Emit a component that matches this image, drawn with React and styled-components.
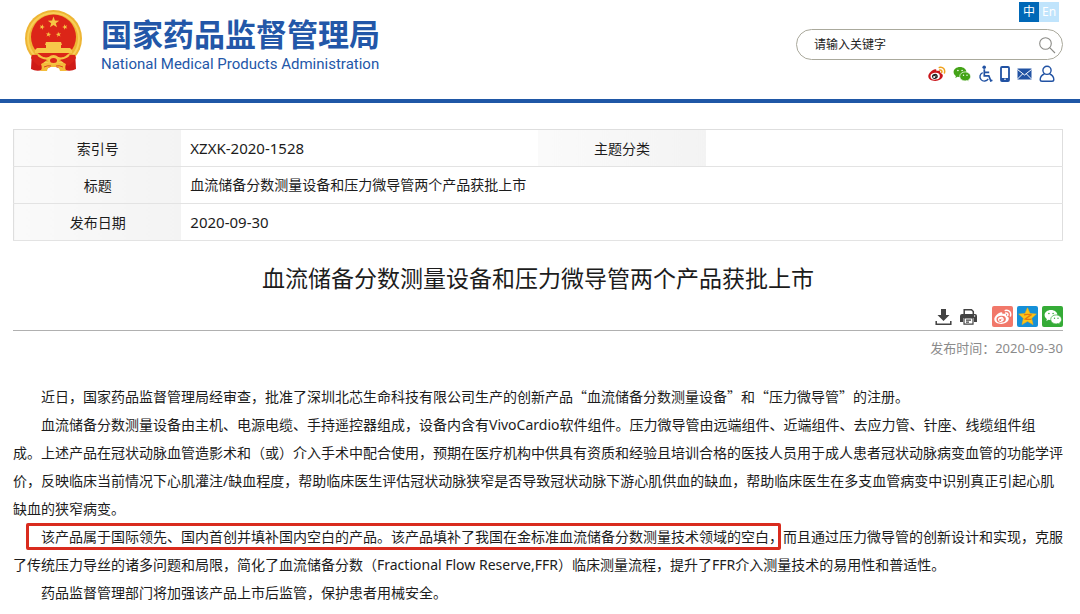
import React from 'react';
import styled, {createGlobalStyle} from "styled-components";

const GlobalStyle = createGlobalStyle`
  * {
    box-sizing: border-box;
  }

  body {
    margin: 0;
    background: #fff;
    color: #1c1c1c;
    font-family: "Noto Sans", "Noto Sans CJK SC", sans-serif;
    font-size: 14px;
    text-spacing-trim: space-all;
  }

  button, input {
    font-family: inherit;
  }
`

const Header = styled.header`
  display: flex;
  justify-content: space-between;
  align-items: flex-start;
  height: 103px;
  padding: 0 17px 0 24px;
  border-bottom: 4px solid #1f57a6;
`

const Brand = styled.a`
  display: flex;
  gap: 18px;
  padding-top: 9px;
  color: #2357a8;
  text-decoration: none;
`

const BrandText = styled.div`
  display: flex;
  flex-direction: column;
  padding-top: 5px;
`

const BrandName = styled.span`
  font-family: "Noto Sans CJK SC", sans-serif;
  font-size: 31px;
  line-height: 38px;
  font-weight: 700;
`

const BrandSub = styled.span`
  margin-top: 2px;
  font-family: Roboto, sans-serif;
  font-size: 15px;
  line-height: 20px;
`

const Tools = styled.div`
  display: flex;
  flex-direction: column;
  align-items: flex-end;
  width: 267px;
  padding-top: 2px;
`

const Langs = styled.div`
  display: flex;
  padding-right: 4px;
`

const Lang = styled.button`
  width: 20px;
  height: 20px;
  padding: 0;
  border: 0;
  font-size: 12px;
  line-height: 20px;
  color: #fff;
  background: ${p => p.$active ? '#0068b7' : '#c0e4fc'};
`

const Search = styled.form`
  display: flex;
  align-items: center;
  width: 100%;
  height: 31px;
  margin-top: 7px;
  padding: 0 6px 0 17px;
  border: 1px solid #aaa99c;
  border-radius: 16px;
`

const SearchInput = styled.input`
  flex: 1;
  min-width: 0;
  padding: 0;
  border: 0;
  outline: 0;
  background: none;
  font-size: 12px;

  &::placeholder {
    color: #222;
    opacity: 1;
  }
`

const IconButton = styled.button`
  display: flex;
  padding: 0;
  border: 0;
  background: none;
  color: #8a8a86;
`

const QuickLinks = styled.nav`
  display: flex;
  align-items: center;
  gap: 7px;
  margin-top: 5px;
  padding-right: 8px;
`

const IconLink = styled.a`
  display: flex;
  color: #2152a3;
`

const Main = styled.main`
  padding: 26px 17px 8px 13px;
`

const InfoTable = styled.table`
  width: 100%;
  table-layout: fixed;
  border-collapse: collapse;
  border: 1px solid #dedede;
`

const Label = styled.th`
  width: 16%;
  height: 37px;
  padding: 0;
  border-bottom: 1px solid #e3e3e3;
  font-weight: 400;
  background: linear-gradient(90deg, #fafafa, #f3f3f3);
`

const Value = styled.td`
  padding: 0 9px;
  border-bottom: 1px solid #e3e3e3;
  font-size: ${p => p.$code ? '15px' : '14px'};
  line-height: 20px;
`

const Title = styled.h1`
  margin: 19px 0 0;
  font-size: 23px;
  line-height: 36px;
  font-weight: 400;
  text-align: center;
`

const ShareBar = styled.div`
  display: flex;
  justify-content: flex-end;
  align-items: center;
  gap: 4px;
  margin-top: 10px;
  padding-bottom: 3px;
  border-bottom: 1px solid #b0b0b0;
`

const PageActions = styled.div`
  display: flex;
  gap: 8px;
  margin-right: 11px;
`

const Action = styled(IconButton)`
  color: #424242;
`

const Share = styled.a`
  display: flex;
  align-items: center;
  justify-content: center;
  width: 21px;
  height: 21px;
  border-radius: 2px;
  background: ${p => p.$color};
`

const Published = styled.p`
  margin: 8px 0 0;
  font-size: 13px;
  line-height: 18px;
  color: #8b8b8b;
  text-align: right;
`

const Article = styled.article`
  margin-top: 25px;
  line-height: 28px;
`

const Paragraph = styled.p`
  margin: 0;
  text-indent: 2em;
`

const Cjk = styled.span`
  font-family: "Noto Sans CJK SC", sans-serif;
`

const Highlight = styled.mark`
  position: relative;
  color: inherit;
  background: none;

  &::after {
    content: '';
    position: absolute;
    inset: -4px 2px -4px -15px;
    border: 3px solid #d92b1e;
    border-radius: 2px;
  }
`

const star = (cx, cy, r, turn = 0) => Array.from({length: 10}, (_, i) => {
    const a = (i * 36 - 90 + turn) * Math.PI / 180
    const d = i % 2 ? r * 0.4 : r
    return `${cx + d * Math.cos(a)},${cy + d * Math.sin(a)}`
}).join(' ')

const Emblem = () => (
    <svg width="59" height="64" viewBox="0 0 59 64" aria-hidden="true">
        <path d="M8 42 L7 60 Q12 63 19 61 L29 57 L40 61 Q47 63 52 60 L51 42Z" fill="#cf1b16"/>
        <circle cx="29.500" cy="29.500" r="28.500" fill="#eeb534"/>
        <circle cx="29.500" cy="29.500" r="25.500" fill="none" stroke="#f8cf57" strokeWidth="2"/>
        <circle cx="29.500" cy="28" r="22.500" fill="#dc2518"/>
        <polygon points={star(29.5, 13.5, 6)} fill="#f6c544"/>
        <polygon points={star(18, 18, 2.8, 20)} fill="#f6c544"/>
        <polygon points={star(41, 18, 2.8, -20)} fill="#f6c544"/>
        <polygon points={star(24.5, 25.5, 2.8, 10)} fill="#f6c544"/>
        <polygon points={star(34.5, 25.5, 2.8, -10)} fill="#f6c544"/>
        <path d="M22 33h15l1 3h-1v3h9l2 2v3H11v-3l2-2h9v-3h-1z" fill="#f7c84a"/>
        <path d="M8 46 Q17 45 23 51 L15 57 Q9 53 7 49Z M51 46 Q42 45 36 51 L44 57 Q50 53 52 49Z" fill="#d92318"/>
        <path d="M14 46 Q20 51 25 49 Q29.500 45 34 49 Q39 51 45 46" fill="none" stroke="#f5c344" strokeWidth="2"/>
        <ellipse cx="29.500" cy="51.500" rx="4.500" ry="3.500" fill="#dc2518" stroke="#f5c344" strokeWidth="2"/>
        <path d="M17 55 Q23 52 29 56 Q36 52 42 55 Q40 60 43 62 H36 Q35 57 29.500 58 Q24 57 23 62 H16 Q19 60 17 55Z" fill="#f3bd3b"/>
        <path d="M20 58q4-2 7-1M39 58q-4-2-7-1" fill="none" stroke="#dc2518" strokeWidth=".8"/>
    </svg>
)

const SearchIcon = () => (
    <svg width="18" height="18" viewBox="0 0 18 18" fill="none" stroke="currentColor" strokeWidth="1.100">
        <circle cx="7.500" cy="7.500" r="5.800"/>
        <path d="M11.700 11.700L17 17"/>
    </svg>
)

const WeiboIcon = ({size = 18, body = '#c9151b', eye = '#fff', pupil = '#222', wave = '#f0a11c'}) => (
    <svg width={size} height={size} viewBox="0 0 18 18">
        <path d="M7.200 4.300C8.400 4.100 8.800 5.200 8.400 6.300c1.600-.7 4.200-.8 4.100 1.700 1.700.6 2.500 1.600 2.300 3-.4 2.900-3.900 4.900-7.600 4.900-3.800 0-6.900-1.600-6.900-4.600C.3 8.300 4.600 4.600 7.200 4.300Z" fill={body}/>
        <ellipse cx="7.200" cy="11.200" rx="4.700" ry="3.400" transform="rotate(-6 7.200 11.200)" fill={eye}/>
        <ellipse cx="6.900" cy="11.400" rx="2.900" ry="2.500" transform="rotate(-18 6.900 11.400)" fill={pupil}/>
        <circle cx="6.100" cy="12" r="1" fill={eye}/>
        <circle cx="7.900" cy="11" r=".5" fill={eye}/>
        <path d="M11.300 2.500C15 1.600 17.500 4.500 16.400 7.900M11.700 5c1.500-.3 2.600.8 2.100 2.300" fill="none" stroke={wave} strokeWidth="1.500" strokeLinecap="round"/>
    </svg>
)

const WechatIcon = ({color = '#43a317', eye = '#fff'}) => (
    <svg width="18" height="18" viewBox="0 0 18 18">
        <path d="M7 2C3.400 2 .6 4.200.6 7.100c0 1.600.9 3 2.300 3.900l-.6 2 2.300-1.200c.8.200 1.600.3 2.400.3 3.600 0 6.400-2.200 6.400-5S10.600 2 7 2Z" fill={color}/>
        <path d="M12.200 6.900c-3.100 0-5.500 2-5.500 4.500s2.400 4.500 5.500 4.500c.7 0 1.300-.1 1.900-.3l1.900 1-.5-1.700c1.300-.8 2.100-2.100 2.100-3.500 0-2.500-2.400-4.500-5.400-4.500Z" fill={color} stroke={eye} strokeWidth=".7"/>
        <g fill={eye}>
            <circle cx="4.900" cy="5.500" r=".8"/>
            <circle cx="9.100" cy="5.500" r=".8"/>
            <circle cx="10.500" cy="10.300" r=".7"/>
            <circle cx="14" cy="10.300" r=".7"/>
        </g>
    </svg>
)

const WheelchairIcon = () => (
    <svg width="15" height="18" viewBox="0 0 15 18" fill="none" stroke="currentColor" strokeWidth="1.700">
        <circle cx="6.200" cy="2.200" r="1.800" fill="currentColor" stroke="none"/>
        <path d="M6.300 4.300v6.500h4.500l2 5 1.600-.6M6.500 7.300h4.700"/>
        <path d="M4.700 7.600a4.400 4.400 0 1 0 5.500 6.200" strokeWidth="1.400"/>
    </svg>
)

const PhoneIcon = () => (
    <svg width="10" height="16" viewBox="0 0 10 16">
        <rect x="1" y="1" width="8" height="14" rx="1" fill="none" stroke="currentColor" strokeWidth="1.800"/>
        <path d="M1 12h8v3H1z" fill="currentColor"/>
        <circle cx="5" cy="13.300" r=".8" fill="#fff"/>
    </svg>
)

const MailIcon = () => (
    <svg width="15" height="12" viewBox="0 0 15 12">
        <rect x=".5" y=".5" width="14" height="11" fill="currentColor"/>
        <path d="M.5 1.500l7 5.500 7-5.500M.5 11l5-5M14.500 11l-5-5" fill="none" stroke="#fff"/>
    </svg>
)

const UserIcon = () => (
    <svg width="16" height="18" viewBox="0 0 16 18" fill="none" stroke="currentColor" strokeWidth="1.400">
        <circle cx="8" cy="5.300" r="4.100"/>
        <path d="M5.400 9C2.800 10 1.200 12 1.200 14.500q0 1.800 1.800 1.800h10q1.800 0 1.800-1.800C14.800 12 13.200 10 10.600 9" strokeLinejoin="round"/>
    </svg>
)

const DownloadIcon = () => (
    <svg width="17" height="18" viewBox="0 0 17 18">
        <path d="M6 1h5v6h3.500l-6 6-6-6H6z" fill="currentColor"/>
        <path d="M1.200 13v3.200h14.600V13" fill="none" stroke="currentColor" strokeWidth="1.500"/>
    </svg>
)

const PrintIcon = () => (
    <svg width="17" height="18" viewBox="0 0 17 18">
        <path d="M4.200 6V1.700h7.300l1.800 1.800V6" fill="none" stroke="currentColor" strokeWidth="1.500"/>
        <path d="M2 6h13q2 0 2 2v6h-3v-4H3v4H0V8q0-2 2-2z" fill="currentColor"/>
        <path d="M4 10h9v6.200H4zM6 12.200h5M6 14.200h3" fill="none" stroke="currentColor" strokeWidth="1.200"/>
        <circle cx="14.600" cy="8" r=".7" fill="#fff"/>
    </svg>
)

const QzoneIcon = () => (
    <svg width="19" height="19" viewBox="0 0 19 19">
        <polygon points="9.5,0.8 12,6.5 18.3,7.1 13.6,11.3 15,17.6 9.5,14.3 4,17.6 5.4,11.3 0.7,7.1 7,6.5" fill="#fcc419" stroke="#f6b00f" strokeWidth=".6"/>
        <path d="M6 7.800q4-.9 7 .1L7.300 12q3 .8 6.200.1" fill="none" stroke="#e8780d" strokeWidth="1.300"/>
    </svg>
)

export default function App() {
    return (
        <>
            <GlobalStyle/>
            <Header>
                <Brand href="#">
                    <Emblem/>
                    <BrandText>
                        <BrandName>国家药品监督管理局</BrandName>
                        <BrandSub>National Medical Products Administration</BrandSub>
                    </BrandText>
                </Brand>
                <Tools>
                    <Langs>
                        <Lang type="button" $active>中</Lang>
                        <Lang type="button">En</Lang>
                    </Langs>
                    <Search>
                        <SearchInput type="text" placeholder="请输入关键字" aria-label="请输入关键字"/>
                        <IconButton type="submit" aria-label="搜索"><SearchIcon/></IconButton>
                    </Search>
                    <QuickLinks>
                        <IconLink href="#" aria-label="微博"><WeiboIcon/></IconLink>
                        <IconLink href="#" aria-label="微信"><WechatIcon/></IconLink>
                        <IconLink href="#" aria-label="无障碍"><WheelchairIcon/></IconLink>
                        <IconLink href="#" aria-label="手机版"><PhoneIcon/></IconLink>
                        <IconLink href="#" aria-label="邮箱"><MailIcon/></IconLink>
                        <IconLink href="#" aria-label="个人中心"><UserIcon/></IconLink>
                    </QuickLinks>
                </Tools>
            </Header>
            <Main>
                <InfoTable>
                    <colgroup>
                        <col width="16%"/>
                        <col width="34%"/>
                        <col width="16%"/>
                        <col width="34%"/>
                    </colgroup>
                    <tbody>
                        <tr>
                            <Label scope="row">索引号</Label>
                            <Value $code>XZXK-2020-1528</Value>
                            <Label scope="row">主题分类</Label>
                            <Value/>
                        </tr>
                        <tr>
                            <Label scope="row">标题</Label>
                            <Value colSpan={3}>血流储备分数测量设备和压力微导管两个产品获批上市</Value>
                        </tr>
                        <tr>
                            <Label scope="row">发布日期</Label>
                            <Value colSpan={3} $code>2020-09-30</Value>
                        </tr>
                    </tbody>
                </InfoTable>
                <Title>血流储备分数测量设备和压力微导管两个产品获批上市</Title>
                <ShareBar>
                    <PageActions>
                        <Action type="button" aria-label="下载"><DownloadIcon/></Action>
                        <Action type="button" aria-label="打印"><PrintIcon/></Action>
                    </PageActions>
                    <Share href="#" aria-label="分享到微博" $color="#f1786a">
                        <WeiboIcon body="#fff" eye="#f1786a" pupil="#fff" wave="#fff"/>
                    </Share>
                    <Share href="#" aria-label="分享到QQ空间" $color="#1590d8"><QzoneIcon/></Share>
                    <Share href="#" aria-label="分享到微信" $color="#35ab37"><WechatIcon color="#fff" eye="#35ab37"/></Share>
                </ShareBar>
                <Published>发布时间：2020-09-30</Published>
                <Article>
                    <Paragraph>
                        近日，国家药品监督管理局经审查，批准了深圳北芯生命科技有限公司生产的创新产品<Cjk>“血流储备分数测量设备”和“压力微导管”</Cjk>的注册。
                    </Paragraph>
                    <Paragraph>
                        血流储备分数测量设备由主机、电源电缆、手持遥控器组成，设备内含有VivoCardio软件组件。压力微导管由远端组件、近端组件、去应力管、针座、线缆组件组成。上述产品在冠状动脉血管造影术和（或）介入手术中配合使用，预期在医疗机构中供具有资质和经验且培训合格的医技人员用于成人患者冠状动脉病变血管的功能学评价，反映临床当前情况下心肌灌注/缺血程度，帮助临床医生评估冠状动脉狭窄是否导致冠状动脉下游心肌供血的缺血，帮助临床医生在多支血管病变中识别真正引起心肌缺血的狭窄病变。
                    </Paragraph>
                    <Paragraph>
                        <Highlight>该产品属于国际领先、国内首创并填补国内空白的产品。该产品填补了我国在金标准血流储备分数测量技术领域的空白，</Highlight>而且通过压力微导管的创新设计和实现，克服了传统压力导丝的诸多问题和局限，简化了血流储备分数（Fractional Flow Reserve,FFR）临床测量流程，提升了FFR介入测量技术的易用性和普适性。
                    </Paragraph>
                    <Paragraph>药品监督管理部门将加强该产品上市后监管，保护患者用械安全。</Paragraph>
                </Article>
            </Main>
        </>
    )
}
